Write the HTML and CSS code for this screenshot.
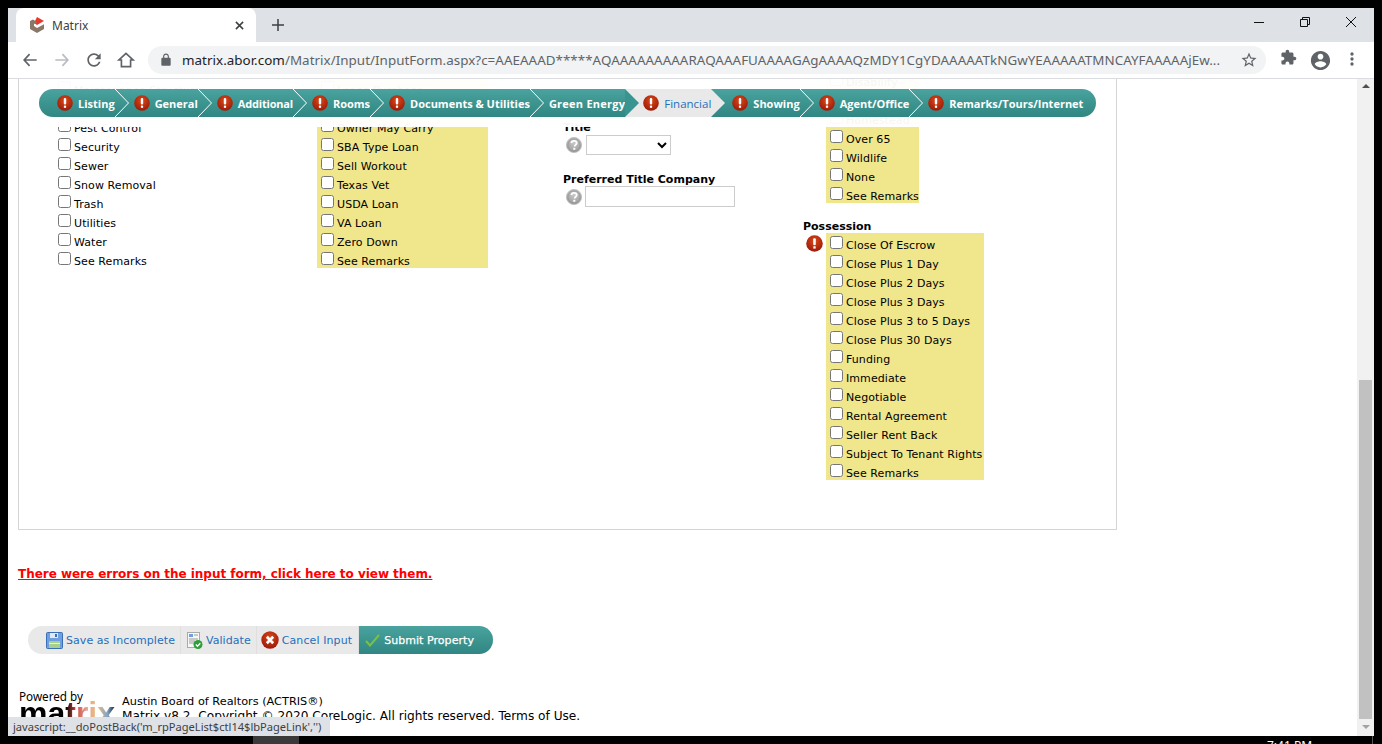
FILE: index.html
```html
<!DOCTYPE html>
<html lang="en">
<head>
    <meta charset="UTF-8">
    <meta name="viewport" content="width=device-width, initial-scale=1.0">
    <title>Matrix</title>
    <link rel="stylesheet" href="styles.css">
</head>
<body>
    <svg class="defs" width="0" height="0">
        <defs>
            <radialGradient id="redBall" cx="50%" cy="35%" r="65%">
                <stop offset="0" stop-color="#d9481a"/>
                <stop offset="1" stop-color="#9c1a08"/>
            </radialGradient>
            <radialGradient id="grayBall" cx="50%" cy="35%" r="65%">
                <stop offset="0" stop-color="#c9c9c9"/>
                <stop offset="1" stop-color="#9a9a9a"/>
            </radialGradient>
            <symbol id="err" viewBox="0 0 16 16">
                <circle cx="8" cy="8" r="7.8" fill="url(#redBall)"/>
                <rect x="6.8" y="3" width="2.4" height="6.6" rx="1" fill="#fff"/>
                <rect x="6.9" y="10.6" width="2.2" height="2.2" fill="#fff"/>
            </symbol>
            <symbol id="help" viewBox="0 0 16 16">
                <circle cx="8" cy="8" r="7.6" fill="url(#grayBall)" stroke="#bdbdbd" stroke-width=".8"/>
                <circle cx="8" cy="8" r="6" fill="none" stroke="#8f8f8f" stroke-width=".5"/>
                <path d="M5.4 6.1C5.5 4.6 6.6 3.8 8 3.8s2.7.8 2.7 2.2c0 1.9-2.1 1.9-2.1 3.6" fill="none" stroke="#fff" stroke-width="1.8"/>
                <rect x="7.3" y="10.8" width="2" height="2" fill="#fff"/>
            </symbol>
        </defs>
    </svg>

    <div class="window">
        <div class="tabstrip">
            <div class="tab">
                <svg class="favicon" viewBox="0 0 16 16">
                    <path d="M8 0l7 4-7 4-3-2z" fill="#e8392c"/>
                    <path d="M1 4l3-1.600L8 5 5 7v2l3 2 7-3.800V12l-7 4-7-4z" fill="#8a7767"/>
                </svg>
                <span class="tab-title">Matrix</span>
                <svg class="tab-close" viewBox="0 0 10 10"><path d="M1 1l8 8M9 1l-8 8" stroke="#3c4043" stroke-width="1.700"/></svg>
            </div>
            <svg class="new-tab" viewBox="0 0 12 12"><path d="M6 0v12M0 6h12" stroke="#3c4043" stroke-width="1.500"/></svg>
            <div class="win-controls">
                <svg viewBox="0 0 12 12"><path d="M1 6.500h10" stroke="#111" stroke-width="1"/></svg>
                <svg viewBox="0 0 12 12"><path d="M3.500 3V1.500h7v7H9M1.500 3.500h7v7h-7z" fill="none" stroke="#111" stroke-width="1"/></svg>
                <svg viewBox="0 0 12 12"><path d="M1 1l10 10M11 1L1 11" stroke="#111" stroke-width="1"/></svg>
            </div>
        </div>

        <div class="toolbar">
            <div class="tb-btn"><svg viewBox="0 0 24 24"><path d="M20 12H5M11.500 5L5 12l6.500 7" fill="none" stroke="#5f6368" stroke-width="2"/></svg></div>
            <div class="tb-btn"><svg viewBox="0 0 24 24"><path d="M4 12h15M12.500 5L19 12l-6.500 7" fill="none" stroke="#b9bcc0" stroke-width="2"/></svg></div>
            <div class="tb-btn"><svg viewBox="0 0 24 24"><path fill="#5f6368" d="M17.650 6.350C16.200 4.900 14.210 4 12 4c-4.420 0-7.990 3.580-7.990 8s3.570 8 7.990 8c3.730 0 6.840-2.550 7.730-6h-2.080c-.82 2.330-3.040 4-5.650 4-3.310 0-6-2.690-6-6s2.690-6 6-6c1.660 0 3.140.69 4.220 1.780L13 11h7V4l-2.350 2.350z"/></svg></div>
            <div class="tb-btn"><svg viewBox="0 0 24 24"><path d="M12 4L3.500 12H6.500v8h11v-8h3z" fill="none" stroke="#5f6368" stroke-width="2"/></svg></div>
            <div class="omnibox">
                <svg class="lock" viewBox="0 0 24 24"><path fill="#5f6368" d="M18 8h-1V6c0-2.760-2.240-5-5-5S7 3.240 7 6v2H6c-1.100 0-2 .9-2 2v10c0 1.100.9 2 2 2h12c1.100 0 2-.9 2-2V10c0-1.100-.9-2-2-2zM9 8V6c0-1.660 1.340-3 3-3s3 1.340 3 3v2H9z"/></svg>
                <span class="url"><b>matrix.abor.com</b>/Matrix/Input/InputForm.aspx?c=AAEAAAD*****AQAAAAAAAAARAQAAAFUAAAAGAgAAAAQzMDY1CgYDAAAAATkNGwYEAAAAATMNCAYFAAAAAjEw...</span>
                <svg class="star" viewBox="0 0 24 24"><path fill="#5f6368" d="M22 9.240l-7.190-.62L12 2 9.190 8.630 2 9.240l5.460 4.730L5.820 21 12 17.270 18.180 21l-1.630-7.030L22 9.240zM12 15.400l-3.760 2.270 1-4.280-3.320-2.880 4.380-.38L12 6.100l1.710 4.040 4.380.38-3.320 2.880 1 4.280L12 15.400z"/></svg>
            </div>
            <div class="tb-right">
                <div class="tb-btn tb-puzzle"><svg viewBox="0 0 24 24"><path fill="#5f6368" d="M20.500 11H19V7c0-1.100-.9-2-2-2h-4V3.500C13 2.120 11.880 1 10.500 1S8 2.120 8 3.500V5H4c-1.100 0-1.990.9-1.990 2v3.800H3.500c1.490 0 2.700 1.210 2.700 2.700s-1.210 2.700-2.700 2.700H2V20c0 1.100.9 2 2 2h3.800v-1.500c0-1.490 1.210-2.700 2.700-2.700 1.490 0 2.700 1.210 2.700 2.700V22H17c1.100 0 2-.9 2-2v-4h1.500c1.380 0 2.500-1.120 2.500-2.500S21.880 11 20.500 11z"/></svg></div>
                <div class="tb-btn tb-profile"><svg viewBox="0 0 24 24"><path fill="#5f6368" d="M12 2C6.480 2 2 6.480 2 12s4.480 10 10 10 10-4.480 10-10S17.520 2 12 2zm0 3c1.660 0 3 1.340 3 3s-1.340 3-3 3-3-1.340-3-3 1.340-3 3-3zm0 14.200c-2.500 0-4.710-1.280-6-3.220.03-1.990 4-3.080 6-3.080 1.990 0 5.970 1.090 6 3.080-1.290 1.940-3.500 3.220-6 3.220z"/></svg></div>
                <div class="tb-btn"><svg viewBox="0 0 24 24"><circle cx="12" cy="6" r="2" fill="#5f6368"/><circle cx="12" cy="12" r="2" fill="#5f6368"/><circle cx="12" cy="18" r="2" fill="#5f6368"/></svg></div>
            </div>
        </div>

        <div class="viewport">
            <div class="page">
                <div class="form-box">
                    <div class="columns">
                        <div class="col col-plain">
                            <label class="opt"><input type="checkbox">Maintenance Structure</label>
                            <label class="opt"><input type="checkbox"></label>
                            <label class="opt"><input type="checkbox">Pest Control</label>
                            <label class="opt"><input type="checkbox">Security</label>
                            <label class="opt"><input type="checkbox">Sewer</label>
                            <label class="opt"><input type="checkbox">Snow Removal</label>
                            <label class="opt"><input type="checkbox">Trash</label>
                            <label class="opt"><input type="checkbox">Utilities</label>
                            <label class="opt"><input type="checkbox">Water</label>
                            <label class="opt"><input type="checkbox">See Remarks</label>
                        </div>
                        <div class="col col-plain">
                            <div class="opts-req opts-wide">
                                <label class="opt"><input type="checkbox">Lease Purchase</label>
                                <label class="opt"><input type="checkbox"></label>
                                <label class="opt"><input type="checkbox">Owner May Carry</label>
                                <label class="opt"><input type="checkbox">SBA Type Loan</label>
                                <label class="opt"><input type="checkbox">Sell Workout</label>
                                <label class="opt"><input type="checkbox">Texas Vet</label>
                                <label class="opt"><input type="checkbox">USDA Loan</label>
                                <label class="opt"><input type="checkbox">VA Loan</label>
                                <label class="opt"><input type="checkbox">Zero Down</label>
                                <label class="opt"><input type="checkbox">See Remarks</label>
                            </div>
                        </div>
                        <div class="col col-fields">
                            <div class="field-label">Title</div>
                            <div class="field-row">
                                <svg class="ico-help"><use href="#help"/></svg>
                                <select class="sel"><option></option></select>
                            </div>
                            <div class="field-label field-next">Preferred Title Company</div>
                            <div class="field-row field-row-txt">
                                <svg class="ico-help"><use href="#help"/></svg>
                                <input class="txt" type="text">
                            </div>
                        </div>
                        <div class="col">
                            <div class="opts-req opts-indent">
                                <label class="opt"><input type="checkbox">Disability</label>
                                <label class="opt"><input type="checkbox"></label>
                                <label class="opt"><input type="checkbox">Homestead</label>
                                <label class="opt"><input type="checkbox">Over 65</label>
                                <label class="opt"><input type="checkbox">Wildlife</label>
                                <label class="opt"><input type="checkbox">None</label>
                                <label class="opt"><input type="checkbox">See Remarks</label>
                            </div>
                            <div class="field-label possession">Possession</div>
                            <div class="req-row">
                                <svg class="ico-err-lg"><use href="#err"/></svg>
                                <div class="opts-req">
                                    <label class="opt"><input type="checkbox">Close Of Escrow</label>
                                    <label class="opt"><input type="checkbox">Close Plus 1 Day</label>
                                    <label class="opt"><input type="checkbox">Close Plus 2 Days</label>
                                    <label class="opt"><input type="checkbox">Close Plus 3 Days</label>
                                    <label class="opt"><input type="checkbox">Close Plus 3 to 5 Days</label>
                                    <label class="opt"><input type="checkbox">Close Plus 30 Days</label>
                                    <label class="opt"><input type="checkbox">Funding</label>
                                    <label class="opt"><input type="checkbox">Immediate</label>
                                    <label class="opt"><input type="checkbox">Negotiable</label>
                                    <label class="opt"><input type="checkbox">Rental Agreement</label>
                                    <label class="opt"><input type="checkbox">Seller Rent Back</label>
                                    <label class="opt"><input type="checkbox">Subject To Tenant Rights</label>
                                    <label class="opt"><input type="checkbox">See Remarks</label>
                                </div>
                            </div>
                        </div>
                    </div>

                    <div class="nav-cover">
                        <div class="nav">
                            <a class="nav-item"><svg class="ico-err"><use href="#err"/></svg>Listing</a>
                            <svg class="sep" viewBox="0 0 14 28"><path d="M0 0l13.500 14L0 28" fill="none" stroke="#fff"/></svg>
                            <a class="nav-item"><svg class="ico-err"><use href="#err"/></svg>General</a>
                            <svg class="sep" viewBox="0 0 14 28"><path d="M0 0l13.500 14L0 28" fill="none" stroke="#fff"/></svg>
                            <a class="nav-item nav-tight"><svg class="ico-err"><use href="#err"/></svg>Additional</a>
                            <svg class="sep" viewBox="0 0 14 28"><path d="M0 0l13.500 14L0 28" fill="none" stroke="#fff"/></svg>
                            <a class="nav-item"><svg class="ico-err"><use href="#err"/></svg>Rooms</a>
                            <svg class="sep" viewBox="0 0 14 28"><path d="M0 0l13.500 14L0 28" fill="none" stroke="#fff"/></svg>
                            <a class="nav-item"><svg class="ico-err"><use href="#err"/></svg>Documents &amp; Utilities</a>
                            <svg class="sep" viewBox="0 0 14 28"><path d="M0 0l13.500 14L0 28" fill="none" stroke="#fff"/></svg>
                            <a class="nav-item nav-loose">Green Energy</a>
                            <svg class="sep sep-in" viewBox="0 0 14 28"><path d="M0 0l14 14L0 28z" fill="#389490"/></svg>
                            <a class="nav-item nav-active"><svg class="ico-err"><use href="#err"/></svg>Financial</a>
                            <svg class="sep sep-out" viewBox="0 0 14 28"><path d="M0 0l14 14L0 28z" fill="#e9e9e9"/></svg>
                            <a class="nav-item"><svg class="ico-err"><use href="#err"/></svg>Showing</a>
                            <svg class="sep" viewBox="0 0 14 28"><path d="M0 0l13.500 14L0 28" fill="none" stroke="#fff"/></svg>
                            <a class="nav-item"><svg class="ico-err"><use href="#err"/></svg>Agent/Office</a>
                            <svg class="sep" viewBox="0 0 14 28"><path d="M0 0l13.500 14L0 28" fill="none" stroke="#fff"/></svg>
                            <a class="nav-item"><svg class="ico-err"><use href="#err"/></svg>Remarks/Tours/Internet</a>
                        </div>
                    </div>
                </div>

                <a class="error-link">There were errors on the input form, click here to view them.</a>

                <div class="actions">
                    <a class="action action-first">
                        <svg class="ico-act" viewBox="0 0 17 17">
                            <rect x=".5" y=".5" width="16" height="16" rx="1" fill="#6f9fdc" stroke="#3a6fb5"/>
                            <rect x="4" y="1" width="8" height="5" fill="#dfe9f5"/>
                            <rect x="9" y="2" width="2" height="3" fill="#3a6fb5"/>
                            <rect x="3" y="9" width="11" height="7" fill="#a6d08c"/>
                            <rect x="3" y="11" width="11" height="1" fill="#e7f3df"/>
                        </svg>
                        Save as Incomplete
                    </a>
                    <a class="action">
                        <svg class="ico-act" viewBox="0 0 17 17">
                            <rect x="1.500" y=".5" width="12" height="15" fill="#f7f7f7" stroke="#a9a9a9"/>
                            <rect x="3" y="2" width="4" height="3" fill="#6f9fdc"/>
                            <path d="M8 3h4M3 7h9M3 9h6M3 11h5" stroke="#999"/>
                            <circle cx="12" cy="12.500" r="4.500" fill="#2f9e3a"/>
                            <path d="M9.800 12.500l1.700 1.700 2.800-3" fill="none" stroke="#fff" stroke-width="1.300"/>
                        </svg>
                        Validate
                    </a>
                    <a class="action action-cancel">
                        <svg class="ico-act" viewBox="0 0 17 17">
                            <circle cx="8.500" cy="8.500" r="8.200" fill="url(#redBall)"/>
                            <path d="M5.500 5.500l6 6M11.500 5.500l-6 6" stroke="#fff" stroke-width="2.600"/>
                        </svg>
                        Cancel Input
                    </a>
                    <a class="action action-submit">
                        <svg class="ico-check" viewBox="0 0 15 13"><path d="M1 7l4 4.500L14 1" fill="none" stroke="#7ac143" stroke-width="2"/></svg>
                        Submit Property
                    </a>
                </div>

                <div class="footer">
                    <div class="powered">
                        <div class="powered-by">Powered by</div>
                        <div class="logo">matrix</div>
                    </div>
                    <div class="legal">
                        <div class="legal-board">Austin Board of Realtors (ACTRIS®)</div>
                        <div class="legal-copy">Matrix v8.2. Copyright © 2020 CoreLogic. All rights reserved. Terms of Use.</div>
                    </div>
                </div>
            </div>

            <div class="scrollbar">
                <div class="arrow arrow-up"></div>
                <div class="thumb"></div>
                <div class="arrow arrow-down"></div>
            </div>

            <div class="status">javascript:__doPostBack('m_rpPageList$ctl14$lbPageLink','')</div>
        </div>
    </div>

    <div class="taskbar">
        <div class="task-active"></div>
        <div class="clock">7:41 PM</div>
        <div class="task-line"></div>
    </div>
</body>
</html>
```

FILE: styles.css
```css
html, body {
    height: 100%;
}

body {
    margin: 0;
    background: #000;
    overflow: hidden;
    font-family: "DejaVu Sans", Verdana, sans-serif;
    font-size: 11px;
    color: #000;
}

.defs {
    display: block;
}

.window {
    margin: 8px 8px 0;
    height: 728px;
    display: flex;
    flex-direction: column;
    background: #fff;
}

/* browser chrome */
.tabstrip {
    height: 34px;
    flex: none;
    display: flex;
    align-items: center;
    background: #dee1e6;
    padding-left: 8px;
}

.tab {
    width: 240px;
    height: 34px;
    display: flex;
    align-items: center;
    background: #fff;
    border-radius: 8px 8px 0 0;
    padding: 0 12px;
    box-sizing: border-box;
}

.favicon {
    width: 16px;
    height: 16px;
    margin: 0 7px 0 1px;
}

.tab-title {
    flex: 1;
    font-family: "Noto Sans", sans-serif;
    font-size: 12px;
    color: #3c4043;
}

.tab-close {
    width: 9px;
    height: 9px;
}

.new-tab {
    width: 12px;
    height: 12px;
    margin-left: 16px;
}

.win-controls {
    margin-left: auto;
    display: flex;
    align-items: center;
    gap: 34px;
    padding: 0 17px 6px 0;
}

.win-controls svg {
    width: 12px;
    height: 12px;
}

.toolbar {
    height: 36px;
    flex: none;
    display: flex;
    align-items: center;
    padding-left: 6px;
    border-bottom: 1px solid #dadce0;
    box-sizing: content-box;
}

.tb-btn {
    width: 32px;
    display: flex;
    justify-content: center;
}

.tb-btn svg {
    width: 20px;
    height: 20px;
}

.tb-btn.tb-puzzle svg {
    width: 17px;
    height: 17px;
}

.tb-btn.tb-profile svg {
    width: 23px;
    height: 23px;
}

.omnibox {
    width: 1118px;
    height: 28px;
    margin-left: 6px;
    display: flex;
    align-items: center;
    padding: 0 8px 0 11px;
    box-sizing: border-box;
    border-radius: 14px;
    background: #f1f3f4;
}

.lock {
    width: 14px;
    height: 14px;
    margin-right: 9px;
}

.url {
    flex: 1;
    font-family: "Noto Sans", sans-serif;
    font-size: 13.4px;
    letter-spacing: 0.033px;
    color: #5f6368;
    white-space: nowrap;
    overflow: hidden;
}

.url b {
    font-weight: normal;
    color: #202124;
}

.star {
    width: 18px;
    height: 18px;
    margin-left: 18px;
}

.tb-right {
    display: flex;
    margin-left: 6px;
}

/* page */
.viewport {
    position: relative;
    flex: 1;
    min-height: 0;
    display: flex;
    overflow: hidden;
}

.page {
    flex: 1;
    min-width: 0;
    padding-left: 10px;
}

.form-box {
    position: relative;
    width: 1097px;
    height: 450px;
    border: 1px solid #d5d5d5;
    border-top: 0;
    overflow: hidden;
}

.columns {
    display: grid;
    grid-template-columns: 259px 246px 240px auto;
    padding-left: 39px;
    margin-top: -9px;
}

.col-plain {
    padding-top: 8px;
}

.col-fields {
    padding-top: 51px;
}

.opt {
    display: flex;
    height: 19px;
    white-space: nowrap;
    line-height: 26px;
    letter-spacing: 0.08px;
}

.opt input {
    width: 13px;
    height: 13px;
    margin: 3px 3px 3px 4px;
    flex: none;
}

.col-plain > .opt input {
    margin-left: 0;
}

.opts-req {
    background: #f0e68c;
    width: max-content;
}

.opts-wide {
    width: 171px;
}

.opts-indent {
    margin-left: 23px;
    width: 93px;
}

.req-row .opts-req {
    width: 158px;
}

.field-label {
    font-weight: bold;
    line-height: 14px;
}

.field-next {
    margin-top: 18px;
}

.field-row {
    display: flex;
    align-items: center;
    padding-left: 3px;
}

.field-row-txt {
    margin-top: -1px;
}

.ico-help {
    width: 16px;
    height: 16px;
    margin-right: 3px;
}

.sel {
    width: 85px;
    height: 20px;
    margin-left: 1px;
    border: 1px solid #ccc;
    background: #fff;
}

.txt {
    width: 150px;
    height: 21px;
    padding: 0 2px;
    box-sizing: border-box;
    border: 1px solid #ccc;
}

.possession {
    margin: 17px 0 -1px;
}

.req-row {
    display: flex;
    align-items: flex-start;
}

.ico-err-lg {
    width: 17px;
    height: 17px;
    margin: 2px 3px 0 3px;
}

.nav-cover {
    position: absolute;
    top: 0;
    left: 0;
    right: 0;
    height: 48px;
    padding: 10px 0 0 20px;
    box-sizing: border-box;
    background: rgba(255, 255, 255, 0.96);
}

.nav {
    width: 1057px;
    height: 28px;
    display: flex;
    align-items: center;
    padding-left: 18px;
    box-sizing: border-box;
    border-radius: 14px;
    background: linear-gradient(#4aa39e, #2f8682);
}

.nav-item {
    display: flex;
    align-items: center;
    height: 28px;
    color: #fff;
    font-family: "Open Sans", sans-serif;
    font-size: 11px;
    font-weight: 700;
    white-space: nowrap;
}

.nav-tight {
    letter-spacing: -0.2px;
}

.nav-loose {
    letter-spacing: 0.25px;
}

.nav-active {
    background: #e9e9e9;
    color: #1f6fbd;
    font-size: 11.5px;
    font-weight: 400;
}

.ico-err {
    width: 16px;
    height: 16px;
    margin-right: 5px;
}

.sep {
    width: 14px;
    height: 28px;
    margin-right: 5px;
    flex: none;
}

.sep-in {
    background: #e9e9e9;
    margin-right: 0;
    padding-right: 4px;
}

.sep-out {
    margin-right: 7px;
}

.error-link {
    display: block;
    margin-top: 36px;
    font-size: 12px;
    font-weight: bold;
    line-height: 16px;
    letter-spacing: -0.033px;
    color: #f00;
    text-decoration: underline;
}

.actions {
    display: flex;
    width: 465px;
    height: 28px;
    margin: 44px 0 0 10px;
    border-radius: 14px;
    overflow: hidden;
    background: #e9e9e9;
}

.action {
    display: flex;
    align-items: center;
    gap: 3px;
    padding: 0 5px;
    border-right: 1px solid #dfdfdf;
    color: #1f6fbd;
    letter-spacing: 0.05px;
    white-space: nowrap;
}

.action-first {
    padding-left: 18px;
}

.action-cancel {
    padding: 0 6px 0 4px;
    letter-spacing: 0.1px;
}

.action-cancel .ico-act {
    width: 18px;
    height: 18px;
}

.action-submit {
    flex: 1;
    padding-left: 6px;
    border-right: 0;
    color: #fff;
    background: linear-gradient(#4aa39e, #2f8682);
    -webkit-text-stroke: 0.25px #fff;
    gap: 4px;
}

.ico-act {
    width: 17px;
    height: 17px;
    flex: none;
}

.ico-check {
    width: 15px;
    height: 13px;
    flex: none;
}

.footer {
    display: flex;
    margin: 36px 0 0 1px;
}

.powered {
    width: 103px;
    flex: none;
    margin-top: -1px;
}

.powered-by {
    font-family: "Noto Sans", sans-serif;
    font-size: 11.7px;
    line-height: 14px;
}

.logo {
    margin-top: -5px;
    font-family: "Liberation Sans", Arial, sans-serif;
    font-weight: bold;
    font-size: 32px;
    line-height: 30px;
    background: linear-gradient(90deg, #000 45%, #c9483f 55%, #e8a29a 66%, #e8c07a 76%, #7fa4c8 86%, #000 95%);
    -webkit-background-clip: text;
    background-clip: text;
    color: transparent;
}

.legal {
    padding-top: 5px;
    line-height: 14px;
}

.legal-board {
    font-size: 11.3px;
}

.legal-copy {
    font-size: 12.15px;
}

/* scrollbar */
.scrollbar {
    width: 17px;
    flex: none;
    display: flex;
    flex-direction: column;
    align-items: center;
    background: #f1f1f1;
}

.arrow {
    width: 0;
    height: 0;
    flex: none;
    border-left: 4px solid transparent;
    border-right: 4px solid transparent;
}

.arrow-up {
    margin-top: 5px;
    border-bottom: 4px solid #505050;
}

.arrow-down {
    margin-top: 6px;
    border-top: 4px solid #a3a3a3;
}

.thumb {
    width: 13px;
    height: 339px;
    margin-top: 292px;
    background: #c1c1c1;
}

/* link hover bubble */
.status {
    position: absolute;
    left: 0;
    bottom: 0;
    width: 322px;
    height: 19px;
    padding-left: 5px;
    box-sizing: border-box;
    background: #dee1e6;
    font-family: "Noto Sans", sans-serif;
    font-size: 11.1px;
    line-height: 19px;
    color: #3c4043;
    white-space: nowrap;
    overflow: hidden;
}

.taskbar {
    height: 8px;
    display: flex;
    overflow: hidden;
    padding-left: 253px;
}

.task-active {
    width: 46px;
    background: #3a3a3a;
}

.clock {
    margin-left: 968px;
    padding-top: 3px;
    font-family: "Noto Sans", sans-serif;
    font-size: 12px;
    line-height: 14px;
    color: #fff;
}

.task-line {
    width: 1px;
    margin-left: 60px;
    background: #555;
}
```
